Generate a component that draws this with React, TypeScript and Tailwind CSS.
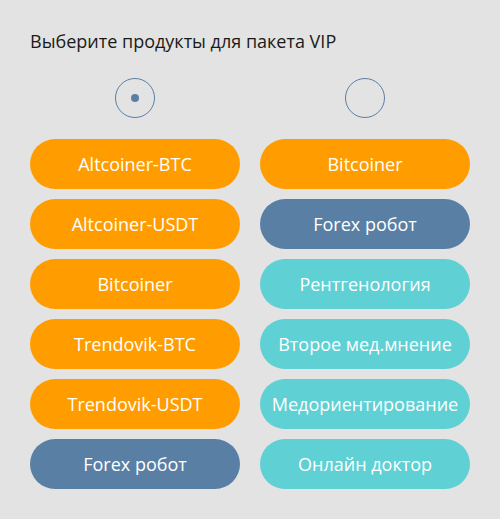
const left = [
  { label: 'Altcoiner-BTC', tone: 'orange' },
  { label: 'Altcoiner-USDT', tone: 'orange' },
  { label: 'Bitcoiner', tone: 'orange' },
  { label: 'Trendovik-BTC', tone: 'orange' },
  { label: 'Trendovik-USDT', tone: 'orange' },
  { label: 'Forex робот', tone: 'blue' },
];

const right = [
  { label: 'Bitcoiner', tone: 'orange' },
  { label: 'Forex робот', tone: 'blue' },
  { label: 'Рентгенология', tone: 'teal' },
  { label: 'Второе мед.мнение', tone: 'teal' },
  { label: 'Медориентирование', tone: 'teal' },
  { label: 'Онлайн доктор', tone: 'teal' },
];

const toneClass: Record<string, string> = {
  orange: 'bg-[#ff9d00]',
  blue: 'bg-[#5a7fa4]',
  teal: 'bg-[#5fd0d4]',
};

const Pill = ({ label, tone }: { label: string; tone: string }) => (
  <div
    className={`h-[50px] w-[210px] rounded-full flex items-center justify-center text-white text-[18px] ${toneClass[tone]}`}
  >
    {label}
  </div>
);

const Radio = ({ checked }: { checked?: boolean }) => (
  <div className="h-[40px] w-[40px] rounded-full border border-[#5a7fa4] flex items-center justify-center">
    {checked && <div className="h-[8px] w-[8px] rounded-full bg-[#5a7fa4]" />}
  </div>
);

export default function App() {
  return (
    <div
      className="w-[500px] h-[519px] bg-[#e3e3e3] pl-[30px] pt-[29px]"
      style={{ fontFamily: '"Open Sans", "Noto Sans", sans-serif' }}
    >
      <h1 className="text-[18px] leading-[24px] text-[#1a1a1a]">Выберите продукты для пакета VIP</h1>
      <div className="mt-[25px] grid grid-cols-[210px_210px] gap-x-[20px]">
        <div className="flex justify-center">
          <Radio checked />
        </div>
        <div className="flex justify-center">
          <Radio />
        </div>
      </div>
      <div className="mt-[21px] grid grid-cols-[210px_210px] gap-x-[20px]">
        <div className="flex flex-col gap-[10px]">
          {left.map((p) => (
            <Pill key={p.label} {...p} />
          ))}
        </div>
        <div className="flex flex-col gap-[10px]">
          {right.map((p) => (
            <Pill key={p.label} {...p} />
          ))}
        </div>
      </div>
    </div>
  );
}
